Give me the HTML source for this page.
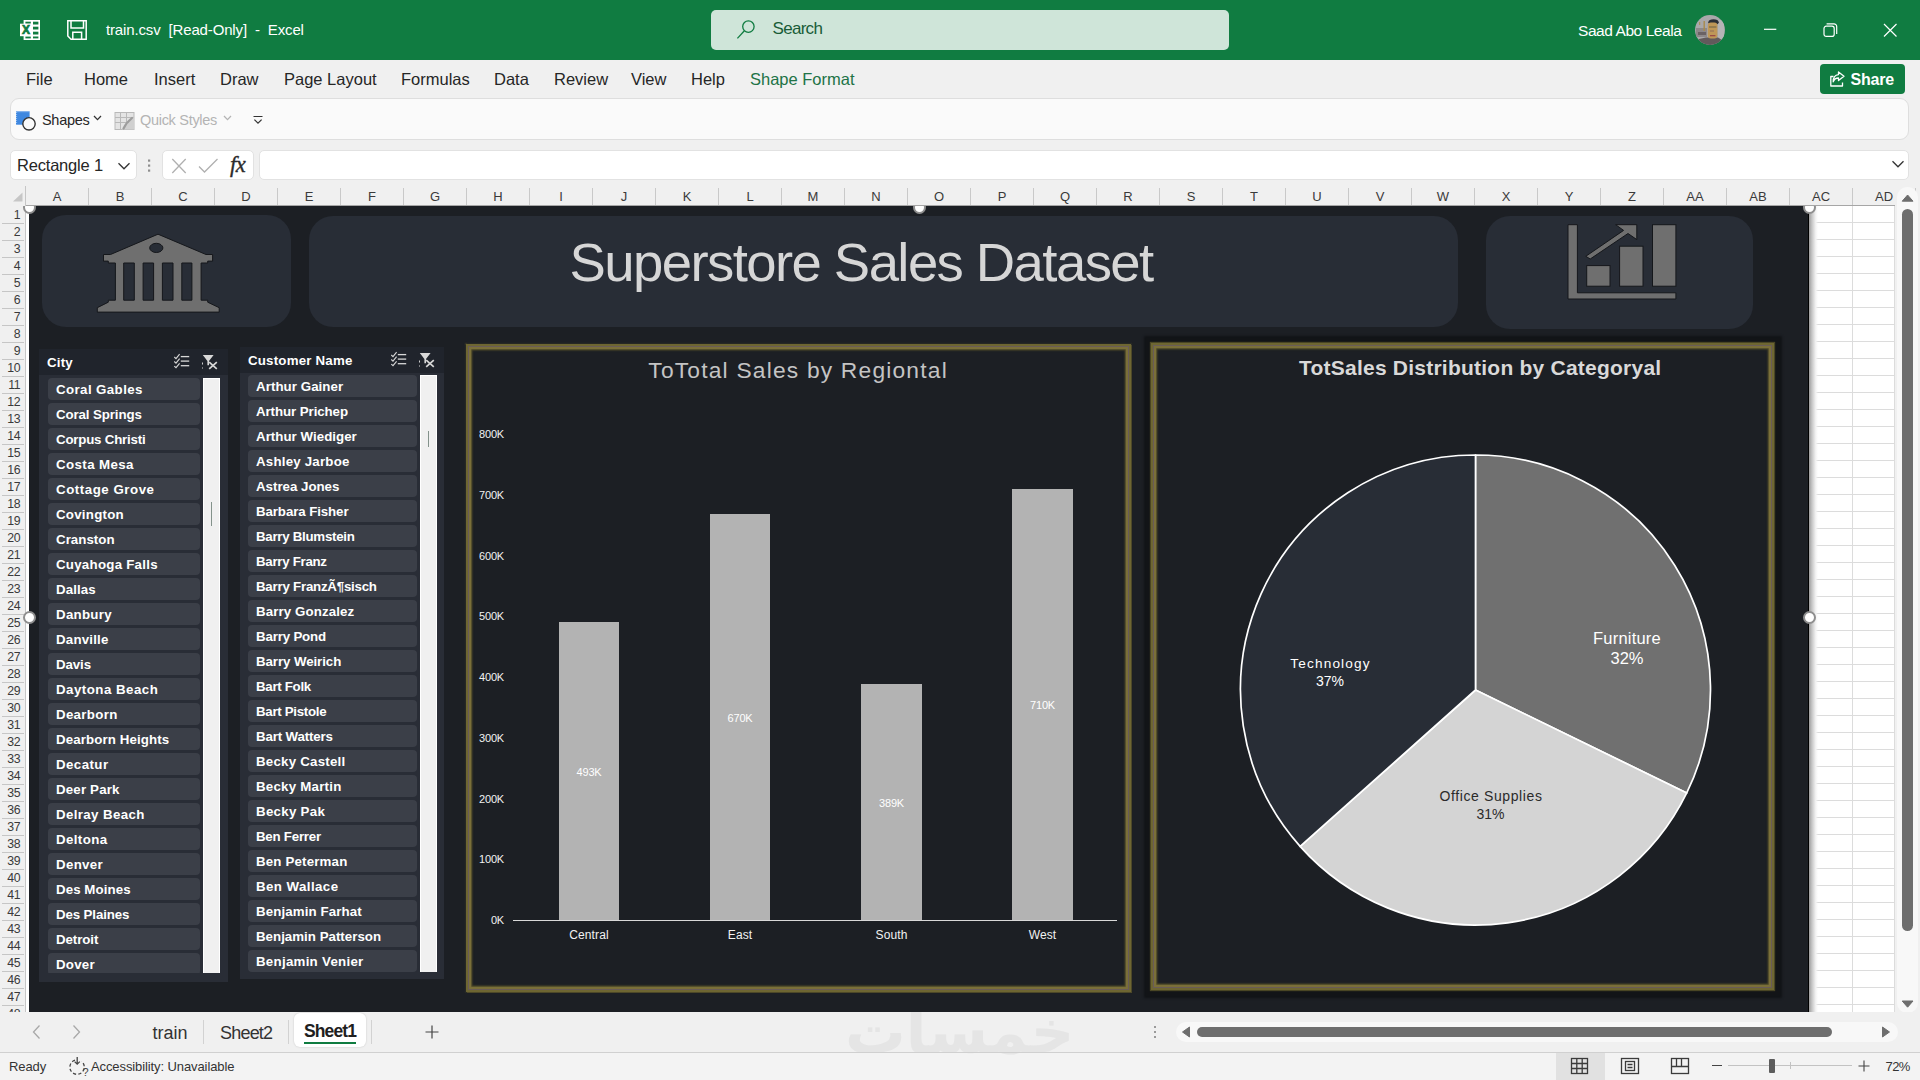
<!DOCTYPE html>
<html lang="en">
<head>
<meta charset="utf-8">
<title>train.csv [Read-Only] - Excel</title>
<style>
*{box-sizing:border-box;margin:0;padding:0}
html,body{width:1920px;height:1080px;overflow:hidden;background:#f0f0f0;font-family:"Liberation Sans",sans-serif;color:#262626}
.abs{position:absolute}
#titlebar{position:absolute;left:0;top:0;width:1920px;height:60px;background:#107c41;color:#fff}
#titlebar .ttl{position:absolute;left:106px;top:20px;font-size:15px;line-height:20px;white-space:pre;letter-spacing:-0.15px}
#search{position:absolute;left:711px;top:10px;width:518px;height:40px;border-radius:5px;background:#cfe5d9}
#search span{position:absolute;left:61.5px;top:9px;font-size:17px;line-height:20px;color:#185c37;letter-spacing:-0.7px}
#user{position:absolute;left:1578px;top:21px;font-size:15.5px;line-height:20px;white-space:pre;letter-spacing:-0.43px}
#menubar{position:absolute;left:0;top:60px;width:1920px;height:38px;background:#f0f0f0}
#menubar span{position:absolute;top:9px;font-size:16.5px;line-height:20px;color:#262626;white-space:pre;letter-spacing:0}
#share{position:absolute;left:1820px;top:64px;width:85px;height:30px;border-radius:4px;background:#107c41;color:#fff}
#share b{position:absolute;left:30.5px;top:6px;font-size:16px;line-height:20px;letter-spacing:-0.2px}
#ribbon{position:absolute;left:10px;top:98px;width:1899px;height:42px;border:1px solid #dedede;border-radius:9px;background:#fafafa}
#ribbon span{position:absolute;top:11px;font-size:14.5px;line-height:20px;white-space:pre;letter-spacing:-0.3px}
.fbox{position:absolute;top:150px;height:30px;background:#fff;border:1px solid #e2e2e2;border-radius:5px}
#colhdr{position:absolute;left:0;top:186px;width:1920px;height:20px;background:#f0f0f0}
#colhdr span{position:absolute;top:3px;width:63px;text-align:center;font-size:13px;line-height:16px;color:#3a3a3a}
#rowhdr{position:absolute;left:0;top:207px;width:26px;height:806px;background:#f0f0f0;overflow:hidden}
#rowhdr span{position:absolute;left:0;width:20px;text-align:right;font-size:12.3px;line-height:17px;color:#3a3a3a;letter-spacing:-0.5px}
#sheet{position:absolute;left:26px;top:206px;width:1869px;height:806px;background:#fff;overflow:hidden}
.gl{position:absolute;background:#dcdcdc;display:block}
#dash{position:absolute;left:29px;top:206px;width:1780px;height:806px;background:#1c1f24;border-right:1px solid #000}
.panel{position:absolute;background:#282d36;border-radius:24px}
.slicer{position:absolute;background:#20242c}
.slicer .hd{position:absolute;left:8px;top:4px;font-size:13.3px;line-height:16px;font-weight:bold;color:#fff;letter-spacing:0.2px;white-space:pre}
.slicer .it{position:absolute;height:22px;border-radius:4px;background:#3b3f48;color:#fff;font-weight:bold;font-size:13.3px;line-height:23px;padding-left:8px;white-space:pre;letter-spacing:0.3px;overflow:hidden}
.slicer .bd{position:absolute;left:0;background:#292d36}
.slicer .sb{position:absolute;background:#f0f0f0;box-shadow:inset 1px 0 #fff,inset -1px 0 #fff,inset 0 1px #fff}
.frame{position:absolute;border:1px solid #695c58;box-shadow:0 0 0 2px #6e6632,0 0 1.5px 3.2px rgba(94,87,42,.75),inset 0 0 0 2.3px #7a6f39,inset 0 0 1.5px 3.4px rgba(94,87,42,.75)}
.frame.dk{box-shadow:0 0 0 2px #6e6632,0 0 1px 2.8px rgba(94,87,42,.75),inset 0 0 0 2.3px #7a6f39,inset 0 0 1.5px 3.4px rgba(94,87,42,.75),0 0 2px 9.5px #121417}
#bigtitle{position:absolute;left:260.5px;top:17px;font-size:54.5px;line-height:60px;color:#d6d6d6;letter-spacing:-1.58px;white-space:pre}
.hdl{position:absolute;width:13px;height:13px;border-radius:50%;background:#fff;border:2px solid #8f8f8f;display:block}
#tabbar{position:absolute;left:0;top:1012px;width:1920px;height:41px;background:#f0f0f0}
#tabbar span{position:absolute;top:10px;font-size:18px;line-height:22px;color:#333;letter-spacing:-0.3px}
.tsep{position:absolute;top:8px;width:1px;height:24px;background:#d2d2d2;display:block}
#wm{position:absolute;left:25px;top:-20px;font-family:"DejaVu Sans",sans-serif;font-weight:bold;font-size:60.5px;line-height:80px;color:#e5e5e5;white-space:pre}
#status{position:absolute;left:0;top:1053px;width:1920px;height:27px;background:#f3f3f3;font-size:13px;color:#333}
#status span{position:absolute;top:6px;line-height:16px;white-space:pre;letter-spacing:-0.1px}
</style>
</head>
<body>
<!-- TITLE BAR -->
<div id="titlebar">
  <svg class="abs" style="left:19px;top:19px" width="22" height="22" viewBox="0 0 22 22"><rect x="4.6" y="1" width="16.4" height="20" fill="#fff"/><g fill="#107c41"><rect x="6.4" y="2.7" width="5.4" height="2"/><rect x="14" y="2.7" width="5.4" height="2.8"/><rect x="14" y="7.7" width="5.4" height="2.8"/><rect x="14" y="12.7" width="5.4" height="2.8"/><rect x="6.4" y="17.5" width="5.4" height="1.9"/><rect x="14" y="17.5" width="5.4" height="1.9"/></g><rect x="1" y="4.7" width="12" height="12.5" fill="#fff"/><text x="7" y="15.3" text-anchor="middle" font-family="Liberation Sans, sans-serif" font-weight="bold" font-size="12" fill="#107c41" stroke="#107c41" stroke-width="0.7">X</text></svg>
  <svg class="abs" style="left:66px;top:19px" width="22" height="22" viewBox="0 0 22 22" fill="none" stroke="#fff" stroke-width="1.5"><path d="M1.8,1.8 H20.2 V20.2 H5 L1.8,17 Z"/><path d="M5,1.8 V9 H17.5 V1.8"/><path d="M6.8,20.2 V13.3 H15.6 V20.2"/></svg>
  <span class="ttl">train.csv  [Read-Only]  -  Excel</span>
  <div id="search"><svg class="abs" style="left:24px;top:8px" width="24" height="24" viewBox="0 0 24 24" fill="none" stroke="#107c41" stroke-width="1.3"><circle cx="13.4" cy="8.6" r="5.7"/><path d="M9.4,12.8 L2.4,20.4"/></svg><span>Search</span></div>
  <span id="user">Saad Abo Leala</span>
  <svg class="abs" style="left:1694px;top:14px" width="32" height="32" viewBox="0 0 32 32"><defs><clipPath id="av"><circle cx="16" cy="16" r="15"/></clipPath></defs><g clip-path="url(#av)"><rect width="32" height="32" fill="#a9a8aa"/><rect x="2" y="14" width="11" height="9" fill="#8d8889"/><rect x="4" y="18" width="8" height="3" fill="#6a6264"/><rect x="9.5" y="7" width="1.4" height="10" fill="#a88a4c"/><rect x="5.2" y="8" width="1" height="3" fill="#a88a4c"/><rect x="24" y="6" width="6" height="20" fill="#b5b4b6"/><path d="M5,32 V25 L12,23.4 H24 L28,26 V32 Z" fill="#625a5b"/><ellipse cx="19.5" cy="8.2" rx="5.2" ry="3" fill="#2b2e35"/><rect x="13.8" y="8.5" width="9.6" height="16" rx="3" fill="#bf9757"/><rect x="15" y="12.4" width="7.4" height="1.2" fill="#7a6a4a"/><rect x="16" y="21" width="5.4" height="1.3" fill="#9a4a48"/><rect x="16" y="16.5" width="4" height="1" fill="#8f6e5a"/></g></svg>
  <svg class="abs" style="left:1760px;top:20px" width="20" height="20" viewBox="0 0 20 20" stroke="#fff" stroke-width="1.2"><path d="M4,9.3 H16.3"/></svg>
  <svg class="abs" style="left:1820px;top:20px" width="20" height="20" viewBox="0 0 20 20" fill="none" stroke="#fff" stroke-width="1.2"><rect x="4" y="6.2" width="10.2" height="10.2" rx="2.2"/><path d="M6.6,3.9 H14 A2.7,2.7 0 0 1 16.7,6.6 V14"/></svg>
  <svg class="abs" style="left:1880px;top:20px" width="20" height="20" viewBox="0 0 20 20" stroke="#fff" stroke-width="1.2"><path d="M4,4 L16.5,16.5 M16.5,4 L4,16.5"/></svg>
</div>
<!-- MENU BAR -->
<div id="menubar">
  <span style="left:26px">File</span>
  <span style="left:84px">Home</span>
  <span style="left:154px">Insert</span>
  <span style="left:220px">Draw</span>
  <span style="left:284px">Page Layout</span>
  <span style="left:401px">Formulas</span>
  <span style="left:494px">Data</span>
  <span style="left:554px">Review</span>
  <span style="left:631px">View</span>
  <span style="left:691px">Help</span>
  <span style="left:750px;color:#217346">Shape Format</span>
</div>
<div id="share"><svg class="abs" style="left:8px;top:6px" width="18" height="18" viewBox="0 0 18 18" fill="none" stroke="#fff" stroke-width="1.3" stroke-linejoin="round"><path d="M5.5,6.5 H2.8 V16 H14.5 V12.5"/><path d="M10.5,2 L16,6.3 L10.5,10.6 V8 Q6.5,8 5.2,11.8 Q5.2,5 10.5,4.6 Z"/></svg><b>Share</b></div>
<!-- RIBBON -->
<div id="ribbon">
  <svg class="abs" style="left:3px;top:10px" width="24" height="24" viewBox="0 0 24 24"><rect x="2" y="2.3" width="13.6" height="13.4" fill="#3f88e0"/><path d="M2.5,2.8 H15.2" stroke="#9cc4f2" stroke-width="1" stroke-dasharray="1 1"/><path d="M2.6,3 V15.4" stroke="#9cc4f2" stroke-width="1" stroke-dasharray="1 1"/><circle cx="15" cy="14.8" r="6.2" fill="#fafafa" stroke="#333" stroke-width="1.4"/></svg>
  <span style="left:31px;color:#262626">Shapes</span>
  <svg class="abs" style="left:81px;top:14px" width="12" height="10" viewBox="0 0 12 10" fill="none" stroke="#333" stroke-width="1.3"><path d="M2,3 L5.5,6.6 L9,3"/></svg>
  <svg class="abs" style="left:102px;top:12px" width="24" height="22" viewBox="0 0 24 22" fill="none"><rect x="2" y="1.5" width="19" height="17" fill="#e4e4e4" stroke="#b9b9b9"/><path d="M2,6.5 H21 M2,11.5 H21 M7.5,1.5 V18.5 M13.5,1.5 V18.5" stroke="#b9b9b9"/><path d="M8.5,18.5 L21,6 V18.5 Z" fill="#d0d0d0"/><path d="M10.5,17.5 Q13,12 19,7" stroke="#9d9d9d" stroke-width="2.2" stroke-linecap="round"/></svg>
  <span style="left:129px;color:#b4b4b4">Quick Styles</span>
  <svg class="abs" style="left:211px;top:14px" width="12" height="10" viewBox="0 0 12 10" fill="none" stroke="#b4b4b4" stroke-width="1.3"><path d="M2,3 L5.5,6.6 L9,3"/></svg>
  <svg class="abs" style="left:240px;top:14px" width="14" height="14" viewBox="0 0 14 14" fill="none" stroke="#333" stroke-width="1.2"><path d="M2.5,3.5 H11.5 M3.4,6.6 L7,10.2 L10.6,6.6"/></svg>
</div>
<!-- FORMULA BAR -->
<div class="fbox" style="left:10px;width:127px"><span style="position:absolute;left:6px;top:4px;font-size:16.5px;line-height:20px;letter-spacing:-0.2px;white-space:pre">Rectangle 1</span><svg class="abs" style="left:105px;top:9px" width="16" height="12" viewBox="0 0 16 12" fill="none" stroke="#333" stroke-width="1.3"><path d="M2.5,3.2 L8,8.8 L13.5,3.2"/></svg></div>
<svg class="abs" style="left:145px;top:157px" width="8" height="18" viewBox="0 0 8 18" fill="#8e8e8e"><rect x="3" y="2.5" width="2.2" height="2.2"/><rect x="3" y="7.5" width="2.2" height="2.2"/><rect x="3" y="12.5" width="2.2" height="2.2"/></svg>
<div class="fbox" style="left:162px;width:92px">
  <svg class="abs" style="left:6px;top:5px" width="20" height="20" viewBox="0 0 20 20" stroke="#b0b0b0" stroke-width="1.3"><path d="M3.3,3 L16.7,17 M16.7,3 L3.3,17"/></svg>
  <svg class="abs" style="left:33px;top:5px" width="24" height="20" viewBox="0 0 24 20" fill="none" stroke="#b0b0b0" stroke-width="1.3"><path d="M3,10.5 L8.5,16 L21.5,3"/></svg>
  <span style="position:absolute;left:67px;top:1px;font-family:'Liberation Serif',serif;font-style:italic;font-size:22.5px;line-height:26px;color:#2b2b2b;letter-spacing:-0.6px;-webkit-text-stroke:0.35px #2b2b2b">fx</span>
</div>
<div class="fbox" style="left:259px;width:1650px"><svg class="abs" style="left:1630px;top:7px" width="16" height="12" viewBox="0 0 16 12" fill="none" stroke="#333" stroke-width="1.3"><path d="M2.5,3.2 L8,8.8 L13.5,3.2"/></svg></div>
<!-- HEADERS -->
<div id="colhdr"><span style="left:25.5px">A</span><span style="left:88.5px">B</span><span style="left:151.5px">C</span><span style="left:214.5px">D</span><span style="left:277.5px">E</span><span style="left:340.5px">F</span><span style="left:403.5px">G</span><span style="left:466.5px">H</span><span style="left:529.5px">I</span><span style="left:592.5px">J</span><span style="left:655.5px">K</span><span style="left:718.5px">L</span><span style="left:781.5px">M</span><span style="left:844.5px">N</span><span style="left:907.5px">O</span><span style="left:970.5px">P</span><span style="left:1033.5px">Q</span><span style="left:1096.5px">R</span><span style="left:1159.5px">S</span><span style="left:1222.5px">T</span><span style="left:1285.5px">U</span><span style="left:1348.5px">V</span><span style="left:1411.5px">W</span><span style="left:1474.5px">X</span><span style="left:1537.5px">Y</span><span style="left:1600.5px">Z</span><span style="left:1663.5px">AA</span><span style="left:1726.5px">AB</span><span style="left:1789.5px">AC</span><span style="left:1852.5px">AD</span><i style="position:absolute;left:88px;top:2px;width:1px;height:18px;background:#c9c9c9"></i><i style="position:absolute;left:151px;top:2px;width:1px;height:18px;background:#c9c9c9"></i><i style="position:absolute;left:214px;top:2px;width:1px;height:18px;background:#c9c9c9"></i><i style="position:absolute;left:277px;top:2px;width:1px;height:18px;background:#c9c9c9"></i><i style="position:absolute;left:340px;top:2px;width:1px;height:18px;background:#c9c9c9"></i><i style="position:absolute;left:403px;top:2px;width:1px;height:18px;background:#c9c9c9"></i><i style="position:absolute;left:466px;top:2px;width:1px;height:18px;background:#c9c9c9"></i><i style="position:absolute;left:529px;top:2px;width:1px;height:18px;background:#c9c9c9"></i><i style="position:absolute;left:592px;top:2px;width:1px;height:18px;background:#c9c9c9"></i><i style="position:absolute;left:655px;top:2px;width:1px;height:18px;background:#c9c9c9"></i><i style="position:absolute;left:718px;top:2px;width:1px;height:18px;background:#c9c9c9"></i><i style="position:absolute;left:781px;top:2px;width:1px;height:18px;background:#c9c9c9"></i><i style="position:absolute;left:844px;top:2px;width:1px;height:18px;background:#c9c9c9"></i><i style="position:absolute;left:907px;top:2px;width:1px;height:18px;background:#c9c9c9"></i><i style="position:absolute;left:970px;top:2px;width:1px;height:18px;background:#c9c9c9"></i><i style="position:absolute;left:1033px;top:2px;width:1px;height:18px;background:#c9c9c9"></i><i style="position:absolute;left:1096px;top:2px;width:1px;height:18px;background:#c9c9c9"></i><i style="position:absolute;left:1159px;top:2px;width:1px;height:18px;background:#c9c9c9"></i><i style="position:absolute;left:1222px;top:2px;width:1px;height:18px;background:#c9c9c9"></i><i style="position:absolute;left:1285px;top:2px;width:1px;height:18px;background:#c9c9c9"></i><i style="position:absolute;left:1348px;top:2px;width:1px;height:18px;background:#c9c9c9"></i><i style="position:absolute;left:1411px;top:2px;width:1px;height:18px;background:#c9c9c9"></i><i style="position:absolute;left:1474px;top:2px;width:1px;height:18px;background:#c9c9c9"></i><i style="position:absolute;left:1537px;top:2px;width:1px;height:18px;background:#c9c9c9"></i><i style="position:absolute;left:1600px;top:2px;width:1px;height:18px;background:#c9c9c9"></i><i style="position:absolute;left:1663px;top:2px;width:1px;height:18px;background:#c9c9c9"></i><i style="position:absolute;left:1726px;top:2px;width:1px;height:18px;background:#c9c9c9"></i><i style="position:absolute;left:1789px;top:2px;width:1px;height:18px;background:#c9c9c9"></i><i style="position:absolute;left:1852px;top:2px;width:1px;height:18px;background:#c9c9c9"></i><i style="position:absolute;left:1915px;top:2px;width:1px;height:18px;background:#c9c9c9"></i></div>
<div id="rowhdr"><span style="top:0px">1</span><span style="top:17px">2</span><span style="top:34px">3</span><span style="top:51px">4</span><span style="top:68px">5</span><span style="top:85px">6</span><span style="top:102px">7</span><span style="top:119px">8</span><span style="top:136px">9</span><span style="top:153px">10</span><span style="top:170px">11</span><span style="top:187px">12</span><span style="top:204px">13</span><span style="top:221px">14</span><span style="top:238px">15</span><span style="top:255px">16</span><span style="top:272px">17</span><span style="top:289px">18</span><span style="top:306px">19</span><span style="top:323px">20</span><span style="top:340px">21</span><span style="top:357px">22</span><span style="top:374px">23</span><span style="top:391px">24</span><span style="top:408px">25</span><span style="top:425px">26</span><span style="top:442px">27</span><span style="top:459px">28</span><span style="top:476px">29</span><span style="top:493px">30</span><span style="top:510px">31</span><span style="top:527px">32</span><span style="top:544px">33</span><span style="top:561px">34</span><span style="top:578px">35</span><span style="top:595px">36</span><span style="top:612px">37</span><span style="top:629px">38</span><span style="top:646px">39</span><span style="top:663px">40</span><span style="top:680px">41</span><span style="top:697px">42</span><span style="top:714px">43</span><span style="top:731px">44</span><span style="top:748px">45</span><span style="top:765px">46</span><span style="top:782px">47</span><span style="top:799px">48</span><i style="position:absolute;left:2px;top:16px;width:22px;height:1px;background:#c6c6c6"></i><i style="position:absolute;left:2px;top:33px;width:22px;height:1px;background:#c6c6c6"></i><i style="position:absolute;left:2px;top:50px;width:22px;height:1px;background:#c6c6c6"></i><i style="position:absolute;left:2px;top:67px;width:22px;height:1px;background:#c6c6c6"></i><i style="position:absolute;left:2px;top:84px;width:22px;height:1px;background:#c6c6c6"></i><i style="position:absolute;left:2px;top:101px;width:22px;height:1px;background:#c6c6c6"></i><i style="position:absolute;left:2px;top:118px;width:22px;height:1px;background:#c6c6c6"></i><i style="position:absolute;left:2px;top:135px;width:22px;height:1px;background:#c6c6c6"></i><i style="position:absolute;left:2px;top:152px;width:22px;height:1px;background:#c6c6c6"></i><i style="position:absolute;left:2px;top:169px;width:22px;height:1px;background:#c6c6c6"></i><i style="position:absolute;left:2px;top:186px;width:22px;height:1px;background:#c6c6c6"></i><i style="position:absolute;left:2px;top:203px;width:22px;height:1px;background:#c6c6c6"></i><i style="position:absolute;left:2px;top:220px;width:22px;height:1px;background:#c6c6c6"></i><i style="position:absolute;left:2px;top:237px;width:22px;height:1px;background:#c6c6c6"></i><i style="position:absolute;left:2px;top:254px;width:22px;height:1px;background:#c6c6c6"></i><i style="position:absolute;left:2px;top:271px;width:22px;height:1px;background:#c6c6c6"></i><i style="position:absolute;left:2px;top:288px;width:22px;height:1px;background:#c6c6c6"></i><i style="position:absolute;left:2px;top:305px;width:22px;height:1px;background:#c6c6c6"></i><i style="position:absolute;left:2px;top:322px;width:22px;height:1px;background:#c6c6c6"></i><i style="position:absolute;left:2px;top:339px;width:22px;height:1px;background:#c6c6c6"></i><i style="position:absolute;left:2px;top:356px;width:22px;height:1px;background:#c6c6c6"></i><i style="position:absolute;left:2px;top:373px;width:22px;height:1px;background:#c6c6c6"></i><i style="position:absolute;left:2px;top:390px;width:22px;height:1px;background:#c6c6c6"></i><i style="position:absolute;left:2px;top:407px;width:22px;height:1px;background:#c6c6c6"></i><i style="position:absolute;left:2px;top:424px;width:22px;height:1px;background:#c6c6c6"></i><i style="position:absolute;left:2px;top:441px;width:22px;height:1px;background:#c6c6c6"></i><i style="position:absolute;left:2px;top:458px;width:22px;height:1px;background:#c6c6c6"></i><i style="position:absolute;left:2px;top:475px;width:22px;height:1px;background:#c6c6c6"></i><i style="position:absolute;left:2px;top:492px;width:22px;height:1px;background:#c6c6c6"></i><i style="position:absolute;left:2px;top:509px;width:22px;height:1px;background:#c6c6c6"></i><i style="position:absolute;left:2px;top:526px;width:22px;height:1px;background:#c6c6c6"></i><i style="position:absolute;left:2px;top:543px;width:22px;height:1px;background:#c6c6c6"></i><i style="position:absolute;left:2px;top:560px;width:22px;height:1px;background:#c6c6c6"></i><i style="position:absolute;left:2px;top:577px;width:22px;height:1px;background:#c6c6c6"></i><i style="position:absolute;left:2px;top:594px;width:22px;height:1px;background:#c6c6c6"></i><i style="position:absolute;left:2px;top:611px;width:22px;height:1px;background:#c6c6c6"></i><i style="position:absolute;left:2px;top:628px;width:22px;height:1px;background:#c6c6c6"></i><i style="position:absolute;left:2px;top:645px;width:22px;height:1px;background:#c6c6c6"></i><i style="position:absolute;left:2px;top:662px;width:22px;height:1px;background:#c6c6c6"></i><i style="position:absolute;left:2px;top:679px;width:22px;height:1px;background:#c6c6c6"></i><i style="position:absolute;left:2px;top:696px;width:22px;height:1px;background:#c6c6c6"></i><i style="position:absolute;left:2px;top:713px;width:22px;height:1px;background:#c6c6c6"></i><i style="position:absolute;left:2px;top:730px;width:22px;height:1px;background:#c6c6c6"></i><i style="position:absolute;left:2px;top:747px;width:22px;height:1px;background:#c6c6c6"></i><i style="position:absolute;left:2px;top:764px;width:22px;height:1px;background:#c6c6c6"></i><i style="position:absolute;left:2px;top:781px;width:22px;height:1px;background:#c6c6c6"></i><i style="position:absolute;left:2px;top:798px;width:22px;height:1px;background:#c6c6c6"></i><i style="position:absolute;left:2px;top:815px;width:22px;height:1px;background:#c6c6c6"></i></div>
<div id="sheet"><i class="gl" style="left:1783px;top:16px;width:87px;height:1px"></i><i class="gl" style="left:1783px;top:33px;width:87px;height:1px"></i><i class="gl" style="left:1783px;top:50px;width:87px;height:1px"></i><i class="gl" style="left:1783px;top:67px;width:87px;height:1px"></i><i class="gl" style="left:1783px;top:84px;width:87px;height:1px"></i><i class="gl" style="left:1783px;top:101px;width:87px;height:1px"></i><i class="gl" style="left:1783px;top:118px;width:87px;height:1px"></i><i class="gl" style="left:1783px;top:135px;width:87px;height:1px"></i><i class="gl" style="left:1783px;top:152px;width:87px;height:1px"></i><i class="gl" style="left:1783px;top:169px;width:87px;height:1px"></i><i class="gl" style="left:1783px;top:186px;width:87px;height:1px"></i><i class="gl" style="left:1783px;top:203px;width:87px;height:1px"></i><i class="gl" style="left:1783px;top:220px;width:87px;height:1px"></i><i class="gl" style="left:1783px;top:237px;width:87px;height:1px"></i><i class="gl" style="left:1783px;top:254px;width:87px;height:1px"></i><i class="gl" style="left:1783px;top:271px;width:87px;height:1px"></i><i class="gl" style="left:1783px;top:288px;width:87px;height:1px"></i><i class="gl" style="left:1783px;top:305px;width:87px;height:1px"></i><i class="gl" style="left:1783px;top:322px;width:87px;height:1px"></i><i class="gl" style="left:1783px;top:339px;width:87px;height:1px"></i><i class="gl" style="left:1783px;top:356px;width:87px;height:1px"></i><i class="gl" style="left:1783px;top:373px;width:87px;height:1px"></i><i class="gl" style="left:1783px;top:390px;width:87px;height:1px"></i><i class="gl" style="left:1783px;top:407px;width:87px;height:1px"></i><i class="gl" style="left:1783px;top:424px;width:87px;height:1px"></i><i class="gl" style="left:1783px;top:441px;width:87px;height:1px"></i><i class="gl" style="left:1783px;top:458px;width:87px;height:1px"></i><i class="gl" style="left:1783px;top:475px;width:87px;height:1px"></i><i class="gl" style="left:1783px;top:492px;width:87px;height:1px"></i><i class="gl" style="left:1783px;top:509px;width:87px;height:1px"></i><i class="gl" style="left:1783px;top:526px;width:87px;height:1px"></i><i class="gl" style="left:1783px;top:543px;width:87px;height:1px"></i><i class="gl" style="left:1783px;top:560px;width:87px;height:1px"></i><i class="gl" style="left:1783px;top:577px;width:87px;height:1px"></i><i class="gl" style="left:1783px;top:594px;width:87px;height:1px"></i><i class="gl" style="left:1783px;top:611px;width:87px;height:1px"></i><i class="gl" style="left:1783px;top:628px;width:87px;height:1px"></i><i class="gl" style="left:1783px;top:645px;width:87px;height:1px"></i><i class="gl" style="left:1783px;top:662px;width:87px;height:1px"></i><i class="gl" style="left:1783px;top:679px;width:87px;height:1px"></i><i class="gl" style="left:1783px;top:696px;width:87px;height:1px"></i><i class="gl" style="left:1783px;top:713px;width:87px;height:1px"></i><i class="gl" style="left:1783px;top:730px;width:87px;height:1px"></i><i class="gl" style="left:1783px;top:747px;width:87px;height:1px"></i><i class="gl" style="left:1783px;top:764px;width:87px;height:1px"></i><i class="gl" style="left:1783px;top:781px;width:87px;height:1px"></i><i class="gl" style="left:1783px;top:798px;width:87px;height:1px"></i><i class="gl" style="left:1783px;top:815px;width:87px;height:1px"></i><i class="gl" style="left:1826px;top:0;width:1px;height:806px"></i><i class="gl" style="left:1868px;top:0;width:1px;height:806px"></i><i style="position:absolute;left:1783px;top:0;width:9px;height:806px;background:linear-gradient(90deg,#9c9c9c,#c9c9c9 35%,#f4f4f4 75%,rgba(255,255,255,0))"></i></div>
<div id="dash"></div>
<div id="dc" style="position:absolute;left:0;top:0;width:1920px;height:1012px;overflow:hidden">
<div class="panel" style="left:42px;top:215px;width:249px;height:112px"></div>
<div class="panel" style="left:309px;top:216px;width:1149px;height:111px"><div id="bigtitle">Superstore Sales Dataset</div></div>
<div class="panel" style="left:1486px;top:216px;width:267px;height:113px"></div>
<div class="slicer" style="left:39px;top:349px;width:189px;height:633px;overflow:hidden">
<span class="hd" style="top:6px">City</span>
<div class="bd" style="top:26px;width:189px;height:607px"></div>
<div class="it" style="left:9px;top:29px;width:152px;letter-spacing:0.40px">Coral Gables</div>
<div class="it" style="left:9px;top:54px;width:152px;letter-spacing:-0.11px">Coral Springs</div>
<div class="it" style="left:9px;top:79px;width:152px;letter-spacing:-0.21px">Corpus Christi</div>
<div class="it" style="left:9px;top:104px;width:152px;letter-spacing:0.40px">Costa Mesa</div>
<div class="it" style="left:9px;top:129px;width:152px;letter-spacing:0.53px">Cottage Grove</div>
<div class="it" style="left:9px;top:154px;width:152px;letter-spacing:0.25px">Covington</div>
<div class="it" style="left:9px;top:179px;width:152px;letter-spacing:0.03px">Cranston</div>
<div class="it" style="left:9px;top:204px;width:152px;letter-spacing:0.25px">Cuyahoga Falls</div>
<div class="it" style="left:9px;top:229px;width:152px;letter-spacing:0.10px">Dallas</div>
<div class="it" style="left:9px;top:254px;width:152px;letter-spacing:0.28px">Danbury</div>
<div class="it" style="left:9px;top:279px;width:152px;letter-spacing:0.20px">Danville</div>
<div class="it" style="left:9px;top:304px;width:152px;letter-spacing:-0.10px">Davis</div>
<div class="it" style="left:9px;top:329px;width:152px;letter-spacing:0.48px">Daytona Beach</div>
<div class="it" style="left:9px;top:354px;width:152px;letter-spacing:0.31px">Dearborn</div>
<div class="it" style="left:9px;top:379px;width:152px;letter-spacing:0.10px">Dearborn Heights</div>
<div class="it" style="left:9px;top:404px;width:152px;letter-spacing:0.43px">Decatur</div>
<div class="it" style="left:9px;top:429px;width:152px;letter-spacing:0.17px">Deer Park</div>
<div class="it" style="left:9px;top:454px;width:152px;letter-spacing:0.37px">Delray Beach</div>
<div class="it" style="left:9px;top:479px;width:152px;letter-spacing:0.38px">Deltona</div>
<div class="it" style="left:9px;top:504px;width:152px;letter-spacing:0.32px">Denver</div>
<div class="it" style="left:9px;top:529px;width:152px;letter-spacing:0.07px">Des Moines</div>
<div class="it" style="left:9px;top:554px;width:152px;letter-spacing:-0.12px">Des Plaines</div>
<div class="it" style="left:9px;top:579px;width:152px;letter-spacing:-0.08px">Detroit</div>
<div class="it" style="left:9px;top:604px;width:152px;letter-spacing:0.23px">Dover</div>
<div class="sb" style="left:164px;top:29px;width:17px;height:595px"><i style="position:absolute;left:7.5px;top:124px;width:1.5px;height:24px;background:#83928b"></i></div>
<div style="position:absolute;left:0;top:624px;width:189px;height:9px;background:#292d36"></div>
</div>
<div class="slicer" style="left:240px;top:347px;width:204px;height:632px;overflow:hidden">
<span class="hd" style="top:6px">Customer Name</span>
<div class="bd" style="top:26px;width:204px;height:606px"></div>
<div class="it" style="left:8px;top:28px;width:169px;letter-spacing:0.06px">Arthur Gainer</div>
<div class="it" style="left:8px;top:53px;width:169px;letter-spacing:-0.08px">Arthur Prichep</div>
<div class="it" style="left:8px;top:78px;width:169px;letter-spacing:0.03px">Arthur Wiediger</div>
<div class="it" style="left:8px;top:103px;width:169px;letter-spacing:0.21px">Ashley Jarboe</div>
<div class="it" style="left:8px;top:128px;width:169px;letter-spacing:-0.01px">Astrea Jones</div>
<div class="it" style="left:8px;top:153px;width:169px;letter-spacing:-0.10px">Barbara Fisher</div>
<div class="it" style="left:8px;top:178px;width:169px;letter-spacing:-0.28px">Barry Blumstein</div>
<div class="it" style="left:8px;top:203px;width:169px;letter-spacing:-0.29px">Barry Franz</div>
<div class="it" style="left:8px;top:228px;width:169px;letter-spacing:-0.23px">Barry FranzÃ¶sisch</div>
<div class="it" style="left:8px;top:253px;width:169px;letter-spacing:0.11px">Barry Gonzalez</div>
<div class="it" style="left:8px;top:278px;width:169px;letter-spacing:-0.17px">Barry Pond</div>
<div class="it" style="left:8px;top:303px;width:169px;letter-spacing:-0.08px">Barry Weirich</div>
<div class="it" style="left:8px;top:328px;width:169px;letter-spacing:-0.30px">Bart Folk</div>
<div class="it" style="left:8px;top:353px;width:169px;letter-spacing:-0.30px">Bart Pistole</div>
<div class="it" style="left:8px;top:378px;width:169px;letter-spacing:-0.15px">Bart Watters</div>
<div class="it" style="left:8px;top:403px;width:169px;letter-spacing:0.22px">Becky Castell</div>
<div class="it" style="left:8px;top:428px;width:169px;letter-spacing:0.23px">Becky Martin</div>
<div class="it" style="left:8px;top:453px;width:169px;letter-spacing:0.29px">Becky Pak</div>
<div class="it" style="left:8px;top:478px;width:169px;letter-spacing:-0.24px">Ben Ferrer</div>
<div class="it" style="left:8px;top:503px;width:169px;letter-spacing:0.17px">Ben Peterman</div>
<div class="it" style="left:8px;top:528px;width:169px;letter-spacing:0.42px">Ben Wallace</div>
<div class="it" style="left:8px;top:553px;width:169px;letter-spacing:0.10px">Benjamin Farhat</div>
<div class="it" style="left:8px;top:578px;width:169px;letter-spacing:0.01px">Benjamin Patterson</div>
<div class="it" style="left:8px;top:603px;width:169px;letter-spacing:0.27px">Benjamin Venier</div>
<div class="sb" style="left:180px;top:28px;width:17px;height:597px"><i style="position:absolute;left:7.5px;top:56px;width:1.5px;height:16px;background:#83928b"></i></div>
<div style="position:absolute;left:0;top:625px;width:204px;height:7px;background:#292d36"></div>
</div>
<div class="frame" style="left:468px;top:346px;width:661px;height:644px"></div>
<div class="frame dk" style="left:1153px;top:345px;width:619px;height:643px"></div>
<svg class="abs" style="left:0;top:0" width="1920" height="1012" viewBox="0 0 1920 1012" font-family="Liberation Sans, sans-serif">
<g id="barchart">
<text x="648.3" y="378.3" font-size="22.8" fill="#c4c4c4" letter-spacing="1.19">ToTotal Sales by Regiontal</text>
<text x="504" y="924.0" text-anchor="end" font-size="11" fill="#f2f2f2" letter-spacing="-0.2">0K</text>
<text x="504" y="863.2" text-anchor="end" font-size="11" fill="#f2f2f2" letter-spacing="-0.2">100K</text>
<text x="504" y="802.5" text-anchor="end" font-size="11" fill="#f2f2f2" letter-spacing="-0.2">200K</text>
<text x="504" y="741.8" text-anchor="end" font-size="11" fill="#f2f2f2" letter-spacing="-0.2">300K</text>
<text x="504" y="681.0" text-anchor="end" font-size="11" fill="#f2f2f2" letter-spacing="-0.2">400K</text>
<text x="504" y="620.2" text-anchor="end" font-size="11" fill="#f2f2f2" letter-spacing="-0.2">500K</text>
<text x="504" y="559.5" text-anchor="end" font-size="11" fill="#f2f2f2" letter-spacing="-0.2">600K</text>
<text x="504" y="498.8" text-anchor="end" font-size="11" fill="#f2f2f2" letter-spacing="-0.2">700K</text>
<text x="504" y="438.0" text-anchor="end" font-size="11" fill="#f2f2f2" letter-spacing="-0.2">800K</text>
<rect x="513" y="920" width="604" height="1" fill="#d9d9d9"/>
<rect x="559" y="622" width="60" height="298" fill="#b3b3b3"/>
<text x="589.0" y="776" text-anchor="middle" font-size="11" fill="#ffffff" letter-spacing="-0.2">493K</text>
<text x="589.0" y="938.5" text-anchor="middle" font-size="12" fill="#f2f2f2" letter-spacing="0.1">Central</text>
<rect x="710" y="514" width="60" height="406" fill="#b3b3b3"/>
<text x="740.0" y="722" text-anchor="middle" font-size="11" fill="#ffffff" letter-spacing="-0.2">670K</text>
<text x="740.0" y="938.5" text-anchor="middle" font-size="12" fill="#f2f2f2" letter-spacing="0.1">East</text>
<rect x="861" y="684" width="61" height="236" fill="#b3b3b3"/>
<text x="891.5" y="807" text-anchor="middle" font-size="11" fill="#ffffff" letter-spacing="-0.2">389K</text>
<text x="891.5" y="938.5" text-anchor="middle" font-size="12" fill="#f2f2f2" letter-spacing="0.1">South</text>
<rect x="1012" y="489" width="61" height="431" fill="#b3b3b3"/>
<text x="1042.5" y="709" text-anchor="middle" font-size="11" fill="#ffffff" letter-spacing="-0.2">710K</text>
<text x="1042.5" y="938.5" text-anchor="middle" font-size="12" fill="#f2f2f2" letter-spacing="0.1">West</text>
</g>
<g id="piechart">
<text x="1299" y="375.3" font-size="21" font-weight="bold" fill="#d9d9d9" letter-spacing="0.23">TotSales Distribution by Categoryal</text>
<path d="M1475.5,690 L1475.50,455.00 A235,235 0 0 1 1686.73,792.99 Z" fill="#707070" stroke="#ffffff" stroke-width="1.7" stroke-linejoin="round"/>
<path d="M1475.5,690 L1686.73,792.99 A235,235 0 0 1 1300.11,846.40 Z" fill="#d4d4d4" stroke="#ffffff" stroke-width="1.7" stroke-linejoin="round"/>
<path d="M1475.5,690 L1300.11,846.40 A235,235 0 0 1 1475.50,455.00 Z" fill="#282d36" stroke="#ffffff" stroke-width="1.7" stroke-linejoin="round"/>
<text x="1627" y="644" text-anchor="middle" font-size="16.5" fill="#ffffff" letter-spacing="0.2">Furniture</text>
<text x="1627" y="664" text-anchor="middle" font-size="16.5" fill="#ffffff">32%</text>
<text x="1330.5" y="668" text-anchor="middle" font-size="13.6" fill="#ffffff" letter-spacing="1.15">Technology</text>
<text x="1330" y="686" text-anchor="middle" font-size="14" fill="#ffffff">37%</text>
<text x="1491" y="801" text-anchor="middle" font-size="14" fill="#2b2b2b" letter-spacing="0.62">Office Supplies</text>
<text x="1490.5" y="819" text-anchor="middle" font-size="14" fill="#2b2b2b">31%</text>
</g>
</svg>
<svg class="abs" style="left:0;top:0" width="1920" height="1012" viewBox="0 0 1920 1012">
<path fill-rule="evenodd" fill="#6f6f6f" stroke="#15171b" stroke-width="1" stroke-linejoin="round" d="M158,234.2 L206,254.5 H212.6 V261.1 H207.7 V263 H201.1 V300.2 H207.7 V302.2 L219.2,307.7 V312.1 H97.3 V307.7 L108.3,302.2 V300.2 H115.4 V263 H108.3 V261.1 H103.5 V254.5 H110.5 Z M123.7,263 H134.3 V300.2 H123.7 Z M143.1,263 H153.6 V300.2 H143.1 Z M162.4,263 H173 V300.2 H162.4 Z M181.8,263 H191.9 V300.2 H181.8 Z M149.7,247.9 a6.6,4.6 0 1 0 13.2,0 a6.6,4.6 0 1 0 -13.2,0 Z"/>
<g fill="#6f6f6f" stroke="#15171b" stroke-width="1" stroke-linejoin="miter"><path d="M1568,224.7 H1577.4 V292.8 H1675.9 V299 H1568 Z"/><rect x="1586.7" y="265.6" width="23.3" height="20.6"/><rect x="1619.6" y="246.2" width="23.4" height="40"/><rect x="1652.5" y="224.7" width="23.4" height="61.5"/><path d="M1585.8,256.3 L1623.6,230.4 L1615.7,224.7 H1636.8 V239.6 L1628,233.5 L1590.2,259 Z"/></g>
<g transform="translate(0,0)" fill="none" stroke="#d8d8d8"><path d="M174.3,357.0 L176,358.6 L179.6,354.20000000000005" stroke-width="1.1"/><path d="M180.8,356.6 H189.2" stroke-width="1.3"/><path d="M174.3,361.5 L176,363.1 L179.6,358.70000000000005" stroke-width="1.1"/><path d="M180.8,361.1 H189.2" stroke-width="1.3"/><path d="M174.3,366.09999999999997 L176,367.7 L179.6,363.3" stroke-width="1.1"/><path d="M180.8,365.7 H189.2" stroke-width="1.3"/><path d="M202.8,355 H213.6 L209,361 V365.3 H207.4 V361 Z" fill="#d8d8d8" stroke="none"/><path d="M209.2,362.2 L216.8,368.8 M216.8,362.2 L209.2,368.8" stroke-width="1.7"/><rect x="202" y="362.5" width="1" height="2" fill="#cfcfcf" stroke="none"/><rect x="202" y="367.5" width="1" height="1" fill="#cfcfcf" stroke="none"/></g>
<g transform="translate(217,-2)" fill="none" stroke="#d8d8d8"><path d="M174.3,357.0 L176,358.6 L179.6,354.20000000000005" stroke-width="1.1"/><path d="M180.8,356.6 H189.2" stroke-width="1.3"/><path d="M174.3,361.5 L176,363.1 L179.6,358.70000000000005" stroke-width="1.1"/><path d="M180.8,361.1 H189.2" stroke-width="1.3"/><path d="M174.3,366.09999999999997 L176,367.7 L179.6,363.3" stroke-width="1.1"/><path d="M180.8,365.7 H189.2" stroke-width="1.3"/><path d="M202.8,355 H213.6 L209,361 V365.3 H207.4 V361 Z" fill="#d8d8d8" stroke="none"/><path d="M209.2,362.2 L216.8,368.8 M216.8,362.2 L209.2,368.8" stroke-width="1.7"/><rect x="202" y="362.5" width="1" height="2" fill="#cfcfcf" stroke="none"/><rect x="202" y="367.5" width="1" height="1" fill="#cfcfcf" stroke="none"/></g>
</svg>
</div>

<div class="abs" style="left:26px;top:205px;width:1869px;height:1px;background:#a6a6a6"></div>
<div class="abs" style="left:25px;top:186px;width:1px;height:826px;background:#c6c6c6"></div>
<svg class="abs" style="left:8px;top:188px" width="16" height="16" viewBox="0 0 16 16"><path d="M14.5,4.5 V13.5 H5 Z" fill="#c6c6c6"/></svg>
<!-- VSCROLL -->
<div class="abs" style="left:1897px;top:187px;width:21px;height:826px;border-radius:10px;background:#f8f8f8"></div>
<div class="abs" style="left:1902px;top:209px;width:11px;height:722px;border-radius:6px;background:#6e6e6e"></div>
<svg class="abs" style="left:1900px;top:192px" width="16" height="12" viewBox="0 0 16 12"><path d="M2.2,9.2 L7.6,3 L13,9.2 Z" fill="#6e6e6e" stroke="#6e6e6e" stroke-width="1" stroke-linejoin="round"/></svg>
<svg class="abs" style="left:1900px;top:998px" width="16" height="12" viewBox="0 0 16 12"><path d="M2.2,3 L13,3 L7.6,9.2 Z" fill="#6e6e6e" stroke="#6e6e6e" stroke-width="1" stroke-linejoin="round"/></svg>
<!-- HANDLES -->
<div class="abs" style="left:0;top:206px;width:1896px;height:806px;overflow:hidden">
<b class="hdl" style="left:22.5px;top:-5px"></b><b class="hdl" style="left:912.5px;top:-5px"></b><b class="hdl" style="left:1802.5px;top:-5px"></b>
<b class="hdl" style="left:22.5px;top:404.5px"></b><b class="hdl" style="left:1802.5px;top:404.5px"></b>
</div>
<!-- TAB BAR -->
<div id="tabbar">
  <svg class="abs" style="left:28px;top:10px" width="60" height="20" viewBox="0 0 60 20" fill="none" stroke="#a8a8a8" stroke-width="1.3"><path d="M11.5,3.5 L5.5,10 L11.5,16.5"/><path d="M45.5,3.5 L51.5,10 L45.5,16.5"/></svg>
  <span style="left:152.5px;letter-spacing:0">train</span>
  <i class="tsep" style="left:203px"></i>
  <span style="left:220px;letter-spacing:-0.8px">Sheet2</span>
  <i class="tsep" style="left:288px"></i>
  <div class="abs" style="left:294px;top:1px;width:72px;height:34px;background:#fff;border-radius:6px;box-shadow:0 0 2px rgba(0,0,0,.18)"></div>
  <span style="left:304px;top:8px;color:#1f1f1f;font-weight:bold;letter-spacing:-0.9px;font-size:17.5px">Sheet1</span>
  <i class="abs" style="left:304px;top:30px;width:52px;height:2px;background:#107c41"></i>
  <i class="tsep" style="left:371px"></i>
  <svg class="abs" style="left:424px;top:12px" width="16" height="16" viewBox="0 0 16 16" stroke="#444" stroke-width="1.2"><path d="M8,1.5 V14.5 M1.5,8 H14.5"/></svg>
  <!-- hscroll -->
  <svg class="abs" style="left:1150px;top:12px" width="10" height="18" viewBox="0 0 10 18" fill="#9a9a9a"><rect x="4" y="2" width="2" height="2"/><rect x="4" y="7" width="2" height="2"/><rect x="4" y="12" width="2" height="2"/></svg>
  <div class="abs" style="left:1176px;top:10px;width:722px;height:20px;border-radius:10px;background:#f8f8f8"></div>
  <svg class="abs" style="left:1180px;top:13px" width="12" height="14" viewBox="0 0 12 14"><path d="M9.5,2 V12 L2.5,7 Z" fill="#6e6e6e" stroke="#6e6e6e" stroke-linejoin="round"/></svg>
  <svg class="abs" style="left:1880px;top:13px" width="12" height="14" viewBox="0 0 12 14"><path d="M2.5,2 V12 L9.5,7 Z" fill="#6e6e6e" stroke="#6e6e6e" stroke-linejoin="round"/></svg>
  <div class="abs" style="left:1197px;top:15px;width:635px;height:10px;border-radius:5px;background:#6e6e6e"></div>
</div>
<!-- STATUS -->
<div id="status">
  <span style="left:9px">Ready</span>
  <svg class="abs" style="left:67px;top:3px" width="24" height="22" viewBox="0 0 24 22" fill="none" stroke="#444" stroke-width="1.3"><path d="M8,4.2 A7.2,7.2 0 1 0 14.6,5.5" stroke-dasharray="3.2 2.2"/><path d="M10.2,1 V8 M7.6,5.6 L10.2,8.2 L12.8,5.6"/><text x="15.5" y="20" font-size="11" font-family="Liberation Sans, sans-serif" fill="#444" stroke="none">?</text></svg>
  <span style="left:91px">Accessibility: Unavailable</span>
  <div class="abs" style="left:1556px;top:0;width:49px;height:27px;background:#e1e1e1"></div>
  <svg class="abs" style="left:1569px;top:2px" width="22" height="22" viewBox="0 0 22 22" fill="none" stroke="#3b3b3b" stroke-width="1.3"><rect x="2.5" y="3.5" width="16" height="15"/><path d="M2.5,8.5 H18.5 M2.5,13.5 H18.5 M7.8,3.5 V18.5 M13.2,3.5 V18.5"/></svg>
  <svg class="abs" style="left:1619px;top:2px" width="22" height="22" viewBox="0 0 22 22" fill="none" stroke="#3b3b3b" stroke-width="1.3"><rect x="2.5" y="3.5" width="17" height="15"/><rect x="6.5" y="6.5" width="9" height="9"/><path d="M8.5,9.5 H13.5 M8.5,12.5 H13.5"/></svg>
  <svg class="abs" style="left:1669px;top:2px" width="22" height="22" viewBox="0 0 22 22" fill="none" stroke="#3b3b3b" stroke-width="1.3"><rect x="2.5" y="3.5" width="17" height="15"/><path d="M7.5,3.5 V11.5 H2.5 M12.5,3.5 V11.5 H19.5 M7.5,11.5 H12.5"/></svg>
  <i class="abs" style="left:1712px;top:12px;width:10px;height:1px;background:#444"></i>
  <i class="abs" style="left:1728px;top:12px;width:124px;height:1px;background:#c2c2c2"></i>
  <i class="abs" style="left:1790px;top:9px;width:1px;height:7px;background:#c2c2c2"></i>
  <i class="abs" style="left:1769px;top:6px;width:6px;height:14px;background:#5c5c5c;border-radius:1px"></i>
  <svg class="abs" style="left:1858px;top:7px" width="12" height="12" viewBox="0 0 12 12" stroke="#444" stroke-width="1.1"><path d="M6,0.5 V11.5 M0.5,6 H11.5"/></svg>
  <span style="left:1885.5px;letter-spacing:-0.6px">72%</span>
</div>
<div class="abs" style="left:820px;top:1012px;width:290px;height:60px;overflow:hidden;pointer-events:none"><span id="wm" lang="ar" dir="rtl">خمسات</span></div>
<div class="abs" style="left:0;top:1052px;width:1920px;height:1px;background:#d0d0d0"></div>
</body>
</html>
